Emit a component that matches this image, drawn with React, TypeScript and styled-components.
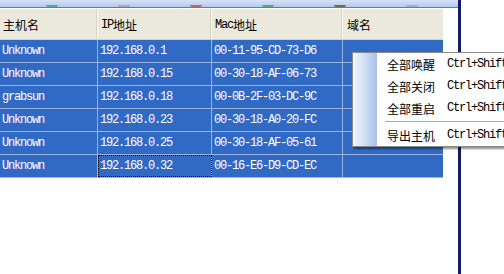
import { FC } from "react";
import styled, { createGlobalStyle } from "styled-components";

interface IHost {
	name: string;
	ip: string;
	mac: string;
	domain: string;
}

const hosts: IHost[] = [
	{ name: "Unknown", ip: "192.168.0.1", mac: "00-11-95-CD-73-D6", domain: "" },
	{ name: "Unknown", ip: "192.168.0.15", mac: "00-30-18-AF-06-73", domain: "" },
	{ name: "grabsun", ip: "192.168.0.18", mac: "00-0B-2F-03-DC-9C", domain: "" },
	{ name: "Unknown", ip: "192.168.0.23", mac: "00-30-18-A0-20-FC", domain: "" },
	{ name: "Unknown", ip: "192.168.0.25", mac: "00-30-18-AF-05-61", domain: "" },
	{ name: "Unknown", ip: "192.168.0.32", mac: "00-16-E6-D9-CD-EC", domain: "" },
];

// shortcut texts run off the right edge in the screenshot
const menuItems = [
	{ label: "全部唤醒", key: "Ctrl+Shift" },
	{ label: "全部关闭", key: "Ctrl+Shift" },
	{ label: "全部重启", key: "Ctrl+Shift" },
	{ label: "-", key: "" },
	{ label: "导出主机", key: "Ctrl+Shift" },
];

const toolColors = ["#5aa6a6", "#a8aab0", "#d0654a", "#5aae5a", "#7a6a48", "#9ab0d4"];

const App: FC = () => {
	return (
		<>
			<GlobalStyle />
			<Screen>
				<MainWindow>
					<Toolbar>
						{toolColors.map((c, i) => (
							<ToolIcon key={i} $color={c} />
						))}
					</Toolbar>
					<TableArea>
						<Table>
							<HeaderRow>
								<HeadCell>主机名</HeadCell>
								<HeadCell>
									<Mono>IP</Mono>地址
								</HeadCell>
								<HeadCell>
									<Mono>Mac</Mono>地址
								</HeadCell>
								<HeadCell $last>域名</HeadCell>
							</HeaderRow>
							{hosts.map((h, i) => (
								<Row key={i}>
									<Cell>
										<Mono>{h.name}</Mono>
									</Cell>
									<Cell $focused={i === hosts.length - 1}>
										<Mono>{h.ip}</Mono>
									</Cell>
									<Cell>
										<Mono>{h.mac}</Mono>
									</Cell>
									<Cell $last>{h.domain}</Cell>
								</Row>
							))}
						</Table>
					</TableArea>
				</MainWindow>
				<Divider />
				<SideArea />
				<Menu>
					<MenuStrip />
					<MenuList>
						{menuItems.map((m, i) =>
							m.label === "-" ? (
								<Separator key={i} />
							) : (
								<MenuItem key={i}>
									<MenuLabel>{m.label}</MenuLabel>
									<Mono>{m.key}</Mono>
								</MenuItem>
							)
						)}
					</MenuList>
				</Menu>
			</Screen>
		</>
	);
};

export default App;

const GlobalStyle = createGlobalStyle`
	body {
		margin: 0;
		background: #ffffff;
		overflow: hidden;
		font-family: "Noto Sans CJK SC", "Liberation Mono", monospace;
		font-size: 12px;
	}
`;

const Screen = styled.div`
	position: relative;
	display: flex;
	width: 504px;
	height: 274px;
	overflow: hidden;
`;

const MainWindow = styled.div`
	width: 458px;
	display: flex;
	flex-direction: column;
	background: #ffffff;
`;

const Toolbar = styled.div`
	height: 7px;
	display: flex;
	align-items: flex-end;
	gap: 60px;
	padding-left: 46px;
	background: linear-gradient(#d6e2f6, #b4caee);
	border-bottom: 1px solid #5a7cc0;
`;

const ToolIcon = styled.span<{ $color: string }>`
	width: 12px;
	height: 2px;
	background: ${(p) => p.$color};
	border-radius: 0 0 3px 3px;
`;

const TableArea = styled.div`
	padding-top: 1px;
	flex: 1;
`;

const Table = styled.div`
	width: 443px;
	display: flex;
	flex-direction: column;
`;

const columns = "98px 114px 131px 100px";

const HeaderRow = styled.div`
	display: grid;
	grid-template-columns: ${columns};
	height: 30px;
	background: #ebe9dc;
	border-bottom: 1px solid #d6d2c2;
`;

const HeadCell = styled.div<{ $last?: boolean }>`
	display: flex;
	align-items: center;
	padding-top: 1px;
	padding-left: ${(p) => (p.$last ? "4px" : "3px")};
	color: #000000;
	border-right: 1px solid ${(p) => (p.$last ? "transparent" : "#f8f7f2")};
	box-shadow: ${(p) => (p.$last ? "none" : "inset -1px 0 0 #d8d4c4")};
	white-space: nowrap;
`;

const Row = styled.div`
	display: grid;
	grid-template-columns: ${columns};
	height: 23px;
	background: #316ac5;
	border-bottom: 1px solid #9ab4e0;
	box-sizing: border-box;
`;

const Cell = styled.div<{ $last?: boolean; $focused?: boolean }>`
	display: flex;
	align-items: center;
	padding-left: 2px;
	color: #ffffff;
	white-space: nowrap;
	border-right: 1px solid ${(p) => (p.$last ? "transparent" : "#9ab4e0")};
	outline: ${(p) => (p.$focused ? "1px dotted #000000" : "none")};
	outline-offset: -1px;
`;

const Mono = styled.span`
	font-family: "Liberation Mono", "Noto Sans CJK SC", monospace;
	letter-spacing: -1.2px;
`;

const Divider = styled.div`
	width: 3px;
	background: #101c64;
`;

const SideArea = styled.div`
	flex: 1;
	background: #ffffff;
`;

const Menu = styled.div`
	position: absolute;
	left: 352px;
	top: 52px;
	width: 180px;
	display: flex;
	background: #ffffff;
	border: 1px solid #8a8a8a;
	box-shadow: 2px 2px 2px rgba(0, 0, 0, 0.45);
`;

const MenuStrip = styled.div`
	width: 24px;
	background: linear-gradient(to right, #f2f6fc, #c8d8f0 60%, #a8c0e8);
`;

const MenuList = styled.div`
	flex: 1;
	display: flex;
	flex-direction: column;
`;

const MenuItem = styled.div`
	height: 22px;
	display: flex;
	align-items: center;
	padding-left: 10px;
	color: #000000;
	white-space: nowrap;
`;

const MenuLabel = styled.span`
	width: 48px;
	margin-right: 12px;
`;

const Separator = styled.div`
	height: 1px;
	margin: 2px 0 2px 8px;
	background: #a8a8a8;
`;
